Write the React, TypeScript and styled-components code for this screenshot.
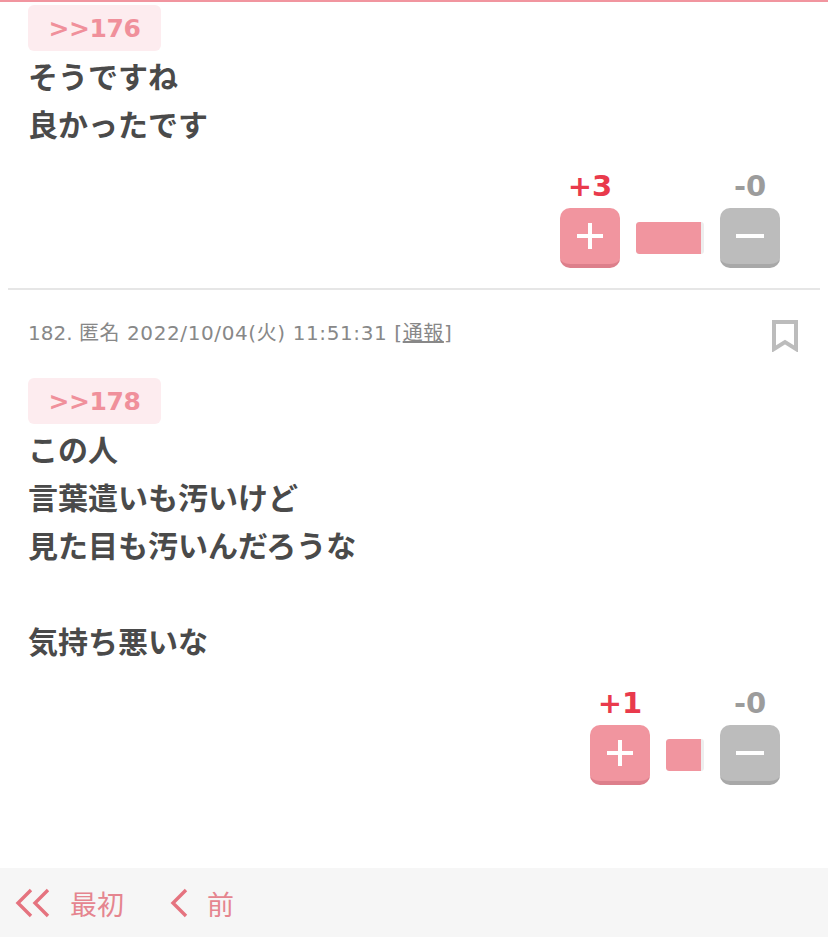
import React from "react";
import styled, { createGlobalStyle } from "styled-components";

const Global = createGlobalStyle`
  html, body { margin: 0; padding: 0; background: #fff; }
  body { font-family: "DejaVu Sans", "Noto Sans CJK JP", sans-serif; }
`;

const Page = styled.div`
  width: 828px;
  height: 937px;
  display: flex;
  flex-direction: column;
  overflow: hidden;
  border-top: 2px solid #f1959f;
  box-sizing: border-box;
`;

const Comment = styled.article<{ $divided?: boolean }>`
  margin: 0 8px;
  padding: ${(p) => (p.$divided ? "28px 40px 0 20px" : "3px 40px 20px 20px")};
  border-bottom: ${(p) => (p.$divided ? "none" : "2px solid #e6e6e6")};
`;

const Meta = styled.div`
  display: flex;
  justify-content: space-between;
  align-items: flex-start;
  height: 60px;
  margin-right: -20px;
`;

const MetaText = styled.span`
  font-size: 20px;
  line-height: 30px;
  color: #888;
  letter-spacing: 0.6px;
`;

const PostNumber = styled.span`
  letter-spacing: 0;
`;

const ReportLink = styled.span`
  text-decoration: underline;
`;

const Mark = styled.svg`
  width: 26px;
  height: 32px;
  margin: 2px 2px 0 0;
  flex: none;
`;

const Anchor = styled.div`
  width: 133px;
  height: 46px;
  border-radius: 6px;
  background: #fdecef;
  color: #f0909b;
  font-size: 25px;
  font-weight: 700;
  line-height: 48px;
  letter-spacing: -0.4px;
  text-align: center;
`;

const Body = styled.div`
  font-size: 30px;
  line-height: 48px;
  font-weight: 700;
  color: #4a4a4a;
  white-space: pre-line;
  font-family: "Noto Sans CJK JP", sans-serif;
`;

const Votes = styled.div`
  display: flex;
  justify-content: flex-end;
  align-items: flex-end;
  margin-top: 17px;
`;

const VoteColumn = styled.div`
  width: 60px;
  display: flex;
  flex-direction: column;
  align-items: center;
`;

const Count = styled.span<{ $plus?: boolean }>`
  font-size: 29px;
  font-weight: 700;
  line-height: 44px;
  color: ${(p) => (p.$plus ? "#e93a4c" : "#9c9c9c")};
`;

const VoteButton = styled.div<{ $plus?: boolean }>`
  width: 60px;
  height: 60px;
  box-sizing: border-box;
  border-radius: 10px;
  background: ${(p) => (p.$plus ? "#f1959f" : "#bcbcbc")};
  border-bottom: 4px solid ${(p) => (p.$plus ? "#dd7f8b" : "#a8a8a8")};
  display: flex;
  align-items: center;
  justify-content: center;
`;

const Bar = styled.div`
  height: 32px;
  margin: 0 16px 14px;
  background: #eeeeee;
  border-radius: 3px;
  display: flex;
  overflow: hidden;
`;

const BarFill = styled.div`
  height: 100%;
  background: #f1959f;
  border-radius: 3px 0 0 3px;
`;

const Footer = styled.nav`
  margin-top: auto;
  height: 69px;
  background: #f6f6f6;
  display: flex;
  align-items: center;
  padding-left: 15px;
`;

const NavItem = styled.div`
  display: flex;
  align-items: center;
  font-family: "Noto Sans CJK JP", sans-serif;
  font-size: 27px;
  margin-right: 46px;
`;

const NavLabel = styled.span`
  margin-left: 19px;
  padding-top: 2px;
  color: #e5858f;
  line-height: 40px;
`;

const PlusIcon = () => (
  <svg width="28" height="28" viewBox="0 0 28 28" aria-hidden="true">
    <path d="M14 1v26M1 14h26" stroke="#fff" strokeWidth="4" />
  </svg>
);
const MinusIcon = () => (
  <svg width="28" height="28" viewBox="0 0 28 28" aria-hidden="true">
    <path d="M0 14h28" stroke="#fff" strokeWidth="4" />
  </svg>
);

const VoteRow = ({ plus, width, fill }: { plus: number; width: number; fill: number }) => (
  <Votes>
    <VoteColumn>
      <Count $plus>+{plus}</Count>
      <VoteButton $plus><PlusIcon /></VoteButton>
    </VoteColumn>
    <Bar style={{ width }}>
      <BarFill style={{ width: fill }} />
    </Bar>
    <VoteColumn>
      <Count>-0</Count>
      <VoteButton><MinusIcon /></VoteButton>
    </VoteColumn>
  </Votes>
);

export default function App() {
  return (
    <Page>
      <Global />
      <Comment>
        <Anchor>&gt;&gt;176</Anchor>
        <Body>{"そうですね\n良かったです"}</Body>
        <VoteRow plus={3} width={68} fill={65} />
      </Comment>
      <Comment $divided>
        <Meta>
          <MetaText>
            <PostNumber>182. </PostNumber>匿名 2022/10/04(火) 11:51:31 [<ReportLink>通報</ReportLink>]
          </MetaText>
          <Mark viewBox="0 0 26 32" aria-hidden="true">
            <path d="M2 2h22v27l-11-7-11 7z" fill="none" stroke="#bcbcbc" strokeWidth="4" />
          </Mark>
        </Meta>
        <Anchor>&gt;&gt;178</Anchor>
        <Body>{"この人\n言葉遣いも汚いけど\n見た目も汚いんだろうな\n\n気持ち悪いな"}</Body>
        <VoteRow plus={1} width={38} fill={35} />
      </Comment>
      <Footer>
        <NavItem>
          <svg width="36" height="30" viewBox="0 0 36 30" aria-hidden="true">
            <path d="M16 2 3 15l13 13M33 2 20 15l13 13" fill="none" stroke="#e5737f" strokeWidth="3.4" />
          </svg>
          <NavLabel>最初</NavLabel>
        </NavItem>
        <NavItem>
          <svg width="18" height="30" viewBox="0 0 18 30" aria-hidden="true">
            <path d="M16 2 3 15l13 13" fill="none" stroke="#e5737f" strokeWidth="3.4" />
          </svg>
          <NavLabel>前</NavLabel>
        </NavItem>
      </Footer>
    </Page>
  );
}
